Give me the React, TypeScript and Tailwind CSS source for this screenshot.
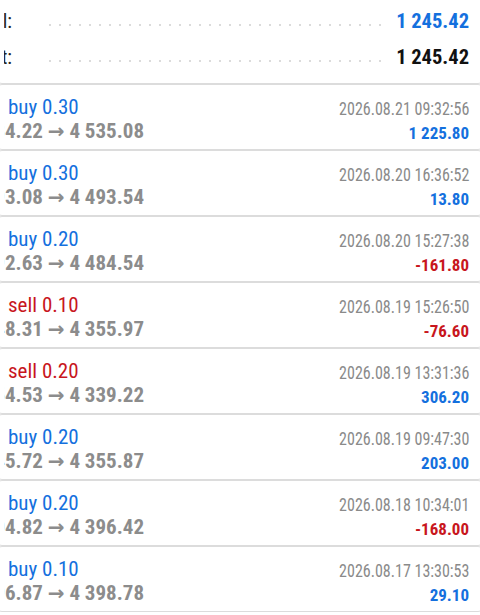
import React from "react";

const FONT = '"Roboto Condensed", "Liberation Sans Narrow", "Arial Narrow", "DejaVu Sans Condensed", sans-serif';

type Row = {
  type: "buy" | "sell";
  vol: string;
  open: string;
  close: string;
  date: string;
  profit: string;
};

const rows: Row[] = [
  { type: "buy", vol: "0.30", open: "4 534.22", close: "4 535.08", date: "2026.08.21 09:32:56", profit: "1 225.80" },
  { type: "buy", vol: "0.30", open: "4 493.08", close: "4 493.54", date: "2026.08.20 16:36:52", profit: "13.80" },
  { type: "buy", vol: "0.20", open: "4 492.63", close: "4 484.54", date: "2026.08.20 15:27:38", profit: "-161.80" },
  { type: "sell", vol: "0.10", open: "4 348.31", close: "4 355.97", date: "2026.08.19 15:26:50", profit: "-76.60" },
  { type: "sell", vol: "0.20", open: "4 354.53", close: "4 339.22", date: "2026.08.19 13:31:36", profit: "306.20" },
  { type: "buy", vol: "0.20", open: "4 345.72", close: "4 355.87", date: "2026.08.19 09:47:30", profit: "203.00" },
  { type: "buy", vol: "0.20", open: "4 404.82", close: "4 396.42", date: "2026.08.18 10:34:01", profit: "-168.00" },
  { type: "buy", vol: "0.10", open: "4 396.87", close: "4 398.78", date: "2026.08.17 13:30:53", profit: "29.10" },
];

function Dots() {
  return (
    <div className="flex-1 flex items-center gap-[8px] pl-[37px] mt-[8px] overflow-hidden">
      {Array.from({ length: 34 }).map((_, i) => (
        <span key={i} className="w-[2px] h-[2px] shrink-0 rounded-full bg-[#cfcfcf]" />
      ))}
    </div>
  );
}

function SummaryRow({ label, value, color }: { label: string; value: string; color: string }) {
  return (
    <div className="flex items-center h-[36px]">
      <div className="ml-[3px] w-[8px] shrink-0 flex justify-end overflow-hidden">
        <span className="whitespace-nowrap text-[20px] leading-[36px] text-[#222222]">{label}</span>
      </div>
      <Dots />
      <div className={`shrink-0 pl-[14px] text-[20.5px] leading-[36px] font-bold ${color}`}>{value}</div>
    </div>
  );
}

export default function App() {
  return (
    <div className="w-[480px] h-[615px] overflow-hidden bg-white" style={{ fontFamily: FONT }}>
      <div className="-mt-[12px] -ml-[4px] -mr-[4px] rounded-[6px] border border-[#dcdcdc] pt-[14px] pb-[8px] pl-[4px] pr-[14px]">
        <SummaryRow label="Total:" value="1 245.42" color="text-[#1470de]" />
        <SummaryRow label="Profit:" value="1 245.42" color="text-[#111111]" />
      </div>
      {rows.map((r, i) => {
        const neg = r.profit.startsWith("-");
        return (
          <div
            key={i}
            className="h-[66px] -ml-[4px] -mr-[4px] rounded-[6px] border border-[#dcdcdc] flex justify-between pl-[7px] pr-[14px]"
          >
            <div className="flex flex-col pt-[10px]">
              <div
                className={`pl-[4px] text-[21px] leading-[24px] whitespace-nowrap ${
                  r.type === "buy" ? "text-[#1470de]" : "text-[#c8161d]"
                }`}
              >
                {r.type} {r.vol}
              </div>
              <div className="w-[140px] flex justify-end overflow-hidden">
                <span className="whitespace-nowrap text-[21px] leading-[24px] font-bold text-[#8c8c8c]">
                  {r.open}{" "}
                  <span style={{ fontFamily: '"DejaVu Sans", sans-serif' }} className="text-[20px]">
                    →
                  </span>{" "}
                  {r.close}
                </span>
              </div>
            </div>
            <div className="flex flex-col items-end pt-[12px]">
              <div className="h-[24px] flex justify-end">
                <span className="inline-block origin-right scale-x-[0.89] text-[18px] leading-[24px] text-[#8a8a8a] whitespace-nowrap">
                  {r.date}
                </span>
              </div>
              <div
                className={`text-[17px] leading-[24px] font-bold whitespace-nowrap ${
                  neg ? "text-[#c8161d]" : "text-[#1470de]"
                }`}
              >
                {r.profit}
              </div>
            </div>
          </div>
        );
      })}
    </div>
  );
}
